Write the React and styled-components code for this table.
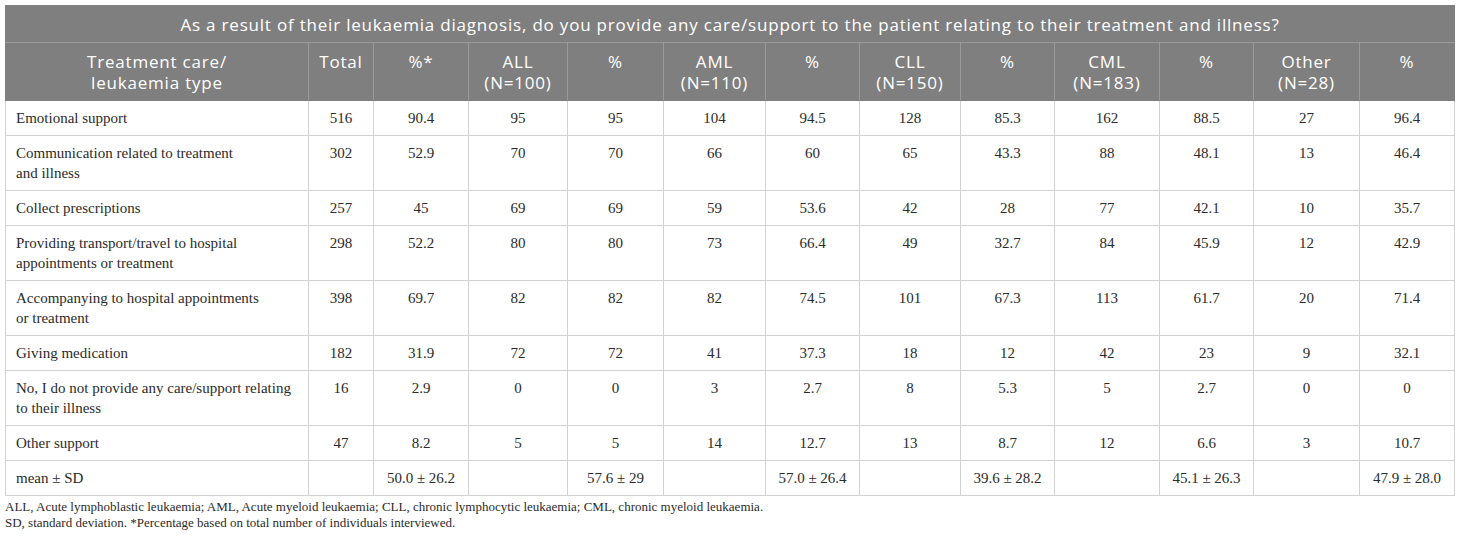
import React from "react";
import styled, { createGlobalStyle } from "styled-components";

const Global = createGlobalStyle`
  html, body { margin: 0; padding: 0; background: #fff; }
  body { font-family: "Liberation Serif", "Times New Roman", serif; }
`;

const Wrap = styled.div`
  padding: 5px 6px 0 5px;
`;

const Table = styled.table`
  border-collapse: collapse;
  table-layout: fixed;
  width: 1449px;
`;

const TitleCell = styled.th`
  background: #7f7f7f;
  color: #fff;
  font-family: "Open Sans", "Liberation Sans", sans-serif;
  font-weight: 400;
  font-size: 17px;
  letter-spacing: 0.8px;
  line-height: 21px;
  padding: 8px 8px 7px;
  text-align: center;
  border: 1px solid #9b9b9b;
  border-top-color: #7f7f7f;
  border-left-color: #7f7f7f;
  border-right-color: #7f7f7f;
`;

const HeadCell = styled.th`
  background: #7f7f7f;
  color: #fff;
  font-family: "Open Sans", "Liberation Sans", sans-serif;
  font-weight: 400;
  font-size: 17px;
  letter-spacing: 0.8px;
  line-height: 21px;
  padding: 8px 2px 7px;
  text-align: center;
  vertical-align: top;
  border: 1px solid #9b9b9b;
  border-bottom-color: #7f7f7f;
  &:first-child { border-left-color: #7f7f7f; }
  &:last-child { border-right-color: #7f7f7f; }
`;

const Cell = styled.td`
  font-family: "Liberation Serif", "Times New Roman", serif;
  font-size: 15px;
  line-height: 20px;
  color: #2b2b2b;
  padding: 7px ${(p) => (p.$left ? "10px" : "4px")} 7px;
  text-align: ${(p) => (p.$left ? "left" : "center")};
  vertical-align: top;
  white-space: nowrap;
  border: 1px solid #d2d2d2;
`;

const Notes = styled.div`
  font-family: "Liberation Serif", "Times New Roman", serif;
  font-size: 13px;
  line-height: 16px;
  color: #2b2b2b;
  padding-top: 3px;
`;

const widths = [303, 65, 95, 99, 96, 102, 94, 101, 94, 105, 94, 106, 95];

const heads = [
  ["Treatment care/", "leukaemia type"],
  ["Total"],
  ["%*"],
  ["ALL", "(N=100)"],
  ["%"],
  ["AML", "(N=110)"],
  ["%"],
  ["CLL", "(N=150)"],
  ["%"],
  ["CML", "(N=183)"],
  ["%"],
  ["Other", "(N=28)"],
  ["%"],
];

const rows = [
  [["Emotional support"], "516", "90.4", "95", "95", "104", "94.5", "128", "85.3", "162", "88.5", "27", "96.4"],
  [["Communication related to treatment", "and illness"], "302", "52.9", "70", "70", "66", "60", "65", "43.3", "88", "48.1", "13", "46.4"],
  [["Collect prescriptions"], "257", "45", "69", "69", "59", "53.6", "42", "28", "77", "42.1", "10", "35.7"],
  [["Providing transport/travel to hospital", "appointments or treatment"], "298", "52.2", "80", "80", "73", "66.4", "49", "32.7", "84", "45.9", "12", "42.9"],
  [["Accompanying to hospital appointments", "or treatment"], "398", "69.7", "82", "82", "82", "74.5", "101", "67.3", "113", "61.7", "20", "71.4"],
  [["Giving medication"], "182", "31.9", "72", "72", "41", "37.3", "18", "12", "42", "23", "9", "32.1"],
  [["No, I do not provide any care/support relating", "to their illness"], "16", "2.9", "0", "0", "3", "2.7", "8", "5.3", "5", "2.7", "0", "0"],
  [["Other support"], "47", "8.2", "5", "5", "14", "12.7", "13", "8.7", "12", "6.6", "3", "10.7"],
  [["mean ± SD"], "", "50.0 ± 26.2", "", "57.6 ± 29", "", "57.0 ± 26.4", "", "39.6 ± 28.2", "", "45.1 ± 26.3", "", "47.9 ± 28.0"],
];

const Lines = ({ lines }) =>
  lines.map((l, i) => (
    <React.Fragment key={i}>
      {i > 0 && <br />}
      {l}
    </React.Fragment>
  ));

export default function App() {
  return (
    <Wrap>
      <Global />
      <Table>
        <colgroup>
          {widths.map((w, i) => (
            <col key={i} style={{ width: w }} />
          ))}
        </colgroup>
        <thead>
          <tr>
            <TitleCell colSpan={13}>
              As a result of their leukaemia diagnosis, do you provide any care/support to the patient relating to their treatment and illness?
            </TitleCell>
          </tr>
          <tr>
            {heads.map((h, i) => (
              <HeadCell key={i}>
                <Lines lines={h} />
              </HeadCell>
            ))}
          </tr>
        </thead>
        <tbody>
          {rows.map((r, ri) => (
            <tr key={ri}>
              <Cell $left>
                <Lines lines={r[0]} />
              </Cell>
              {r.slice(1).map((v, ci) => (
                <Cell key={ci}>{v}</Cell>
              ))}
            </tr>
          ))}
        </tbody>
      </Table>
      <Notes>
        ALL, Acute lymphoblastic leukaemia; AML, Acute myeloid leukaemia; CLL, chronic lymphocytic leukaemia; CML, chronic myeloid leukaemia.
        <br />
        SD, standard deviation. *Percentage based on total number of individuals interviewed.
      </Notes>
    </Wrap>
  );
}
